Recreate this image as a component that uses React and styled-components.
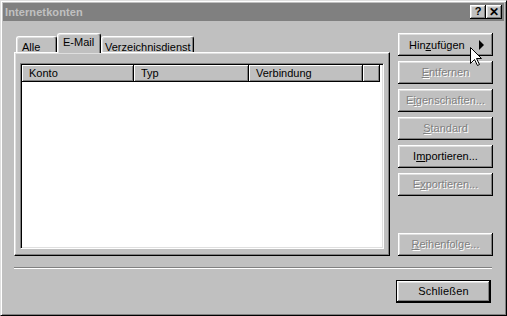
import styled, { createGlobalStyle } from "styled-components";

const Global = createGlobalStyle`
  html, body { margin: 0; padding: 0; background: #c0c0c0; }
  body { font-family: "Liberation Sans", Arial, sans-serif; font-size: 11px; }
`;

const Frame = styled.div`
  width: 507px;
  height: 316px;
  box-sizing: border-box;
  background: #c0c0c0;
  border: 1px solid;
  border-color: #dfdfdf #000 #000 #dfdfdf;
  box-shadow: inset 1px 1px #fff, inset -1px -1px #808080;
  padding: 2px;
  display: flex;
  flex-direction: column;
`;

const TitleBar = styled.div`
  height: 18px;
  background: #808080;
  color: #c0c0c0;
  font-weight: bold;
  font-size: 11px;
  display: flex;
  align-items: center;
  padding: 0 2px;
`;

const TitleText = styled.div`
  flex: 1;
  letter-spacing: 0.1px;
`;

const TitleButton = styled.div`
  width: 16px;
  height: 14px;
  box-sizing: border-box;
  background: #c0c0c0;
  box-shadow: inset -1px -1px #000, inset 1px 1px #fff, inset -2px -2px #808080, inset 2px 2px #dfdfdf;
  color: #000;
  font-weight: bold;
  font-size: ${p => (p.close ? "12px" : "11px")};
  display: flex;
  align-items: center;
  justify-content: center;
  line-height: 1;
  padding-bottom: 1px;
`;

const Content = styled.div`
  padding: 12px 0 0 11px;
  display: flex;
  flex-direction: column;
`;

const MainRow = styled.div`
  display: flex;
  gap: 8px;
`;

const LeftColumn = styled.div`
  width: 376px;
  display: flex;
  flex-direction: column;
`;

const TabStrip = styled.div`
  height: 19px;
  display: flex;
  align-items: flex-end;
  padding-left: 2px;
`;

const Tab = styled.div`
  position: relative;
  box-sizing: border-box;
  width: ${p => p.w}px;
  height: ${p => (p.active ? 20 : 16)}px;
  margin-bottom: ${p => (p.active ? -1 : 0)}px;
  z-index: ${p => (p.active ? 2 : 1)};
  background: #c0c0c0;
  border-top: 1px solid #fff;
  border-left: 1px solid #fff;
  border-right: 1px solid #000;
  border-radius: 3px 3px 0 0;
  box-shadow: inset -1px 0 #808080, inset 1px 1px #dfdfdf;
  padding: ${p => (p.active ? "1px" : "3px")} 0 0 ${p => p.pad}px;
  line-height: 14px;
  white-space: nowrap;
`;

const Panel = styled.div`
  box-sizing: border-box;
  width: 376px;
  height: 204px;
  border: 1px solid;
  border-color: #fff #000 #000 #fff;
  box-shadow: inset -1px -1px #808080, inset 1px 1px #dfdfdf;
  padding: 10px 0 0 5px;
`;

const ListView = styled.div`
  box-sizing: border-box;
  width: 364px;
  height: 186px;
  background: #fff;
  border: 1px solid;
  border-color: #808080 #fff #fff #808080;
  box-shadow: inset 1px 1px #000, inset -1px -1px #dfdfdf;
  padding: 1px;
`;

const Header = styled.div`
  display: flex;
  height: 17px;
`;

const HeaderCell = styled.div`
  box-sizing: border-box;
  width: ${p => p.w}px;
  height: 17px;
  background: #c0c0c0;
  box-shadow: inset -1px -1px #000, inset 1px 1px #fff, inset -2px -2px #808080;
  padding-left: 7px;
  line-height: 16px;
  white-space: nowrap;
`;

const RightColumn = styled.div`
  width: 95px;
  height: 223px;
  display: flex;
  flex-direction: column;
  gap: 5px;
`;

const Button = styled.div`
  position: relative;
  box-sizing: border-box;
  width: 95px;
  height: 23px;
  flex-shrink: 0;
  background: #c0c0c0;
  box-shadow: inset -1px -1px #000, inset 1px 1px #fff, inset -2px -2px #808080, inset 2px 2px #dfdfdf;
  display: flex;
  align-items: center;
  justify-content: ${p => (p.menu ? "space-between" : "center")};
  padding: ${p => (p.menu ? "0 9px 0 11px" : "0 0 1px")};
  margin-top: ${p => (p.bottom ? "auto" : "0")};
  color: ${p => (p.disabled ? "#808080" : "#000")};
  text-shadow: ${p => (p.disabled ? "1px 1px 0 #fff" : "none")};
  white-space: nowrap;
`;

const DefaultButton = styled(Button)`
  border: 1px solid #000;
  letter-spacing: 0.2px;
`;

const U = styled.span`
  text-decoration: underline;
  text-underline-offset: 1px;
`;

const Arrow = styled.span`
  width: 0;
  height: 0;
  border-top: 5px solid transparent;
  border-bottom: 5px solid transparent;
  border-left: 5px solid #000;
`;

const Cursor = styled.svg`
  position: absolute;
  left: 72px;
  top: 14px;
  z-index: 5;
`;

const Separator = styled.div`
  width: 478px;
  height: 0;
  margin-top: 11px;
  border-top: 1px solid #808080;
  border-bottom: 1px solid #fff;
`;

const Footer = styled.div`
  width: 477px;
  margin-top: 11px;
  display: flex;
  justify-content: flex-end;
`;

export default function App() {
  return (
    <>
      <Global />
      <Frame>
        <TitleBar>
          <TitleText>Internetkonten</TitleText>
          <TitleButton>?</TitleButton>
          <TitleButton close>✕</TitleButton>
        </TitleBar>
        <Content>
          <MainRow>
            <LeftColumn>
              <TabStrip>
                <Tab w={41} pad={5}>Alle</Tab>
                <Tab w={44} pad={5} active>E-Mail</Tab>
                <Tab w={93} pad={3}>Verzeichnisdienst</Tab>
              </TabStrip>
              <Panel>
                <ListView>
                  <Header>
                    <HeaderCell w={112}>Konto</HeaderCell>
                    <HeaderCell w={115}>Typ</HeaderCell>
                    <HeaderCell w={114}>Verbindung</HeaderCell>
                    <HeaderCell w={17} />
                  </Header>
                </ListView>
              </Panel>
            </LeftColumn>
            <RightColumn>
              <Button menu>
                <span>Hin<U>z</U>ufügen</span>
                <Arrow />
                <Cursor width="13" height="20" viewBox="0 0 13 20">
                  <path
                    d="M0.5 0.5 L0.5 16.5 L4.5 12.5 L7.5 18.5 L9.5 17.5 L6.5 11.5 L11.5 11.5 Z"
                    fill="#fff"
                    stroke="#000"
                    strokeWidth="1"
                  />
                </Cursor>
              </Button>
              <Button disabled><span><U>E</U>ntfernen</span></Button>
              <Button disabled><span>E<U>i</U>genschaften...</span></Button>
              <Button disabled><span><U>S</U>tandard</span></Button>
              <Button><span>I<U>m</U>portieren...</span></Button>
              <Button disabled><span>E<U>x</U>portieren...</span></Button>
              <Button disabled bottom><span><U>R</U>eihenfolge...</span></Button>
            </RightColumn>
          </MainRow>
          <Separator />
          <Footer>
            <DefaultButton>Schließen</DefaultButton>
          </Footer>
        </Content>
      </Frame>
    </>
  );
}
